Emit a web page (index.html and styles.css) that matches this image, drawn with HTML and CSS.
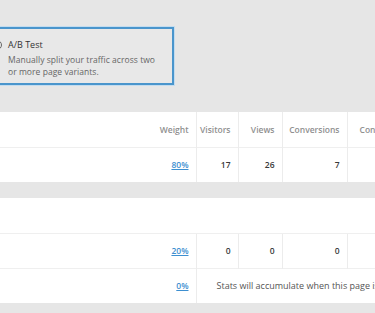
FILE: index.html
```html
<!DOCTYPE html>
<html>
<head>
<meta charset="utf-8">
<link rel="stylesheet" href="styles.css">
</head>
<body>
<div class="top">
  <div class="option">
    <span class="radio"></span>
    <div class="option-body">
      <div class="option-title">A/B Test</div>
      <div class="option-desc">Manually split your traffic across two or more page variants.</div>
    </div>
  </div>
</div>

<table class="stats">
  <colgroup><col class="c1"><col class="c2"><col class="c3"><col class="c4"><col class="c5"></colgroup>
  <tr class="head">
    <th class="w">Weight</th><th>Visitors</th><th>Views</th><th>Conversions</th><th class="last">Conversion Rate</th>
  </tr>
  <tr>
    <td class="w"><a href="#">80%</a></td><td>17</td><td>26</td><td>7</td><td class="last"></td>
  </tr>
</table>

<table class="stats second">
  <colgroup><col class="c1"><col class="c2"><col class="c3"><col class="c4"><col class="c5"></colgroup>
  <tr class="blank"><td colspan="5"></td></tr>
  <tr>
    <td class="w"><a href="#">20%</a></td><td>0</td><td>0</td><td>0</td><td class="last"></td>
  </tr>
  <tr>
    <td class="w"><a href="#">0%</a></td><td colspan="4" class="msg">Stats will accumulate when this page is published.</td>
  </tr>
</table>
</body>
</html>
```
FILE: styles.css
```css
html, body {
  margin: 0;
  padding: 0;
  background: #e6e6e6;
  overflow: hidden;
  font-family: "Open Sans", "Liberation Sans", sans-serif;
}
.top {
  height: 112px;
  padding-top: 27px;
  box-sizing: border-box;
}
.option {
  display: flex;
  align-items: flex-start;
  gap: 6px;
  width: 186px;
  height: 58px;
  margin-left: -12px;
  box-sizing: border-box;
  border: 2px solid #4a95cc;
  box-shadow: 0 0 0 1px #c3dcef;
  background: #e8e8e8;
  padding: 10px 0 0 2px;
}
.radio {
  width: 10px;
  height: 10px;
  box-sizing: border-box;
  border: 1px solid #666;
  border-radius: 50%;
  margin-top: 1px;
  flex: none;
}
.option-title {
  font-size: 9px;
  color: #333;
  line-height: 12px;
}
.option-desc {
  margin-top: 3px;
  font-size: 8.5px;
  color: #666;
  line-height: 12px;
  width: 154px;
  letter-spacing: 0.05px;
}
.stats {
  background: #fff;
  border-collapse: collapse;
  table-layout: fixed;
  width: 447px;
}
.second {
  margin-top: 16px;
}
.c1 { width: 196px; }
.c2 { width: 42px; }
.c3 { width: 44px; }
.c4 { width: 65px; }
.c5 { width: 100px; }
th, td {
  height: 35px;
  padding: 0 7px 0 0;
  text-align: right;
  font-size: 8.5px;
  border-left: 1px solid #ececec;
  border-top: 1px solid #efefef;
  box-sizing: border-box;
  white-space: nowrap;
  overflow: hidden;
}
tr:first-child th, tr:first-child td { border-top: none; }
th.w, td.w { border-left: none; }
th {
  font-weight: 600;
  color: #909090;
}
td {
  color: #3a3a3a;
  font-weight: 600;
}
th.last, td.last {
  text-align: left;
  padding-left: 12px;
}
td.w a {
  color: #3d8fd0;
  text-decoration: underline;
  font-weight: 600;
}
.blank td { border: none; }
td.msg {
  text-align: left;
  padding-left: 20px;
  font-weight: 400;
  color: #555;
  font-size: 9px;
}
```
